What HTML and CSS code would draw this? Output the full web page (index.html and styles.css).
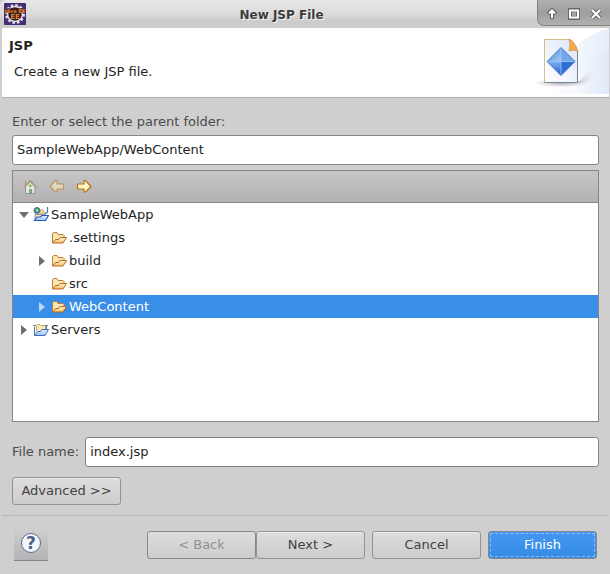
FILE: index.html
```
<!DOCTYPE html>
<html lang="en">
<head>
<meta charset="utf-8">
<title>New JSP File</title>
<link rel="stylesheet" href="styles.css">
</head>
<body>
<svg class="defs" aria-hidden="true">
  <defs>
    <linearGradient id="gold" x1="0" y1="0" x2="0" y2="1"><stop offset="0" stop-color="#fff3cf"/><stop offset="1" stop-color="#f3bf6c"/></linearGradient>
    <linearGradient id="blue" x1="0" y1="0" x2="0" y2="1"><stop offset="0" stop-color="#e6f1ff"/><stop offset="1" stop-color="#9cc0f4"/></linearGradient>
    <symbol id="folder" viewBox="0 0 16 16">
      <path d="M1.500 13V4l1-1.500h3.500l1 2h5l1 1v2.500" fill="#fbe5b4" stroke="#c08132"/>
      <path d="M1.500 13 4.500 9.500h3L9 7.500h6.500L12 13z" fill="url(#gold)" stroke="#b26d1d"/>
    </symbol>
    <symbol id="project" viewBox="0 0 16 16">
      <path d="M1.500 13V4.500M13.500 4v4" fill="none" stroke="#4a72bd"/>
      <path d="M3.500 9V3.500l1-1H7l1 1h4.500V8" fill="#fbe9b2" stroke="#c7a568"/>
      <path d="M0 3.500h3M12 3.500h3" stroke="#7c7e82"/>
      <path d="M1.500 13.500 4.500 9.500h3L9 7.500h6.500L12 13.500z" fill="url(#blue)" stroke="#3e68c2"/>
    </symbol>
    <symbol id="web" viewBox="0 0 16 16">
      <path d="M2 13.500V7.500h10.500v1.500" fill="#f8e3b0" stroke="#8598b8"/>
      <path d="M7 7V4l2-2 2 2v3z" fill="#f7d28c" stroke="#c9a15c" stroke-width=".7"/>
      <path d="M1.500 13.500 4 10h3.500L9 8.500h6.500L12.500 13.500z" fill="url(#blue)" stroke="#2858c5" stroke-width="1.200"/>
      <circle cx="4" cy="3.500" r="3" fill="#3c8a82" stroke="#4b779c"/>
      <path d="M2.500 2.500l2-1 1 2-2 2z" fill="#a6d79c"/>
      <path d="M14.500 0v4.500q0 2-3 1.500" fill="none" stroke="#4b75a9" stroke-width="1.200"/>
    </symbol>
    <symbol id="arrow" viewBox="0 0 16 16">
      <path d="M1.500 5H8V1.500h1.500L15 7.500 9.500 13H8V10H1.500z" fill="#fff2c4" stroke="#b8740e" stroke-width="1.200" stroke-linejoin="round"/>
    </symbol>
  </defs>
</svg>
<div class="dialog">
  <header class="titlebar">
    <svg class="app-icon" viewBox="0 0 22 22" aria-hidden="true">
      <rect width="22" height="22" rx="1" fill="#482c73"/>
      <circle cx="11" cy="11" r="8.500" fill="none" stroke="#e4dfe5" stroke-width="3" stroke-dasharray="2.500 1.950"/>
      <circle cx="11" cy="11" r="7.500" fill="#24202b" stroke="#e4dfe5" stroke-width="1.500"/>
      <path d="M1 5h20v5H1z" fill="#472021" opacity=".7"/>
      <text x="11" y="10" class="app-text">Java EE</text>
      <text x="11" y="16" class="app-text app-text-large">EE</text>
    </svg>
    <h1 class="title">New JSP File</h1>
    <div class="window-controls">
      <button type="button" aria-label="Roll up"><svg viewBox="0 0 12 12"><path d="M6 1v10M2 6l4-4 4 4" class="glyph-edge"/><path d="M6 2v8M3 5.500l3-3 3 3" class="glyph"/></svg></button>
      <button type="button" aria-label="Maximize"><svg viewBox="0 0 12 12"><path d="M2 2h8v8H2z" class="glyph-edge"/><path d="M2 2.500h8v7H2z" class="glyph glyph-square"/></svg></button>
      <button type="button" aria-label="Close"><svg viewBox="0 0 12 12"><path d="M2 2l8 8M10 2l-8 8" class="glyph-edge"/><path d="M2 2l8 8M10 2l-8 8" class="glyph"/></svg></button>
    </div>
  </header>
  <section class="banner">
    <div>
      <h2>JSP</h2>
      <p>Create a new JSP file.</p>
    </div>
    <svg class="banner-art" viewBox="0 0 74 66" aria-hidden="true">
      <defs>
        <linearGradient id="sky" x1="0" y1="0" x2="1" y2="0"><stop offset="0" stop-color="#fff"/><stop offset="1" stop-color="#dbe6f8"/></linearGradient>
        <linearGradient id="shade" x1="0" y1="0" x2="1" y2="0"><stop offset="0" stop-color="#b0a8c0"/><stop offset="1" stop-color="#dfe3f3" stop-opacity="0"/></linearGradient>
        <linearGradient id="page" x1="1" y1="0" x2="0" y2="1"><stop offset="0" stop-color="#dce4f8"/><stop offset="1" stop-color="#fff"/></linearGradient>
        <linearGradient id="gemtop" x1="0" y1="0" x2="1" y2="1"><stop offset="0" stop-color="#3d7bd2"/><stop offset="1" stop-color="#a7cdf8"/></linearGradient>
        <linearGradient id="gemlow" x1="0" y1="0" x2="0" y2="1"><stop offset="0" stop-color="#7fb2f3"/><stop offset="1" stop-color="#1b58c6"/></linearGradient>
        <radialGradient id="floor"><stop offset="0" stop-color="#8e7887" stop-opacity=".6"/><stop offset="1" stop-color="#8e7887" stop-opacity="0"/></radialGradient>
      </defs>
      <path d="M14 66Q26 14 74 0v66z" fill="url(#sky)" opacity=".7"/>
      <path d="M34 66Q42 29 74 21v45z" fill="url(#sky)" opacity=".6"/>
      <path d="M42 55 60 39v14z" fill="url(#shade)" opacity=".7"/>
      <ellipse cx="26" cy="55" rx="27" ry="4" fill="url(#floor)"/>
      <path d="M9.500 11.500h25l8 12v31h-33z" fill="url(#page)" stroke="#6d8d91"/>
      <path d="M9.500 54V11.500h25" fill="none" stroke="#d9bc8c"/>
      <path d="M34 11q6 2 9 13-3-3-9-1 2-7 0-12z" fill="#f6a84b" stroke="#d58d45" stroke-width=".7"/>
      <path d="M12 33.500 26 19.500v14z" fill="url(#gemtop)"/>
      <path d="M26 19.500 40 33.500H26z" fill="#72a8eb"/>
      <path d="M12 33.500h14v14z" fill="url(#gemlow)"/>
      <path d="M26 33.500h14L26 47.500z" fill="#2f70d6"/>
      <path d="M12 33.500 26 19.500l14 14-14 14z" fill="none" stroke="#2f68bb" stroke-width=".8"/>
      <path d="M13 33.500h26M26 20.500v26" stroke="#9ac5f8" stroke-width=".8"/>
    </svg>
  </section>
  <form class="content">
    <label class="folder-label" for="parent">Enter or select the parent folder:</label>
    <input id="parent" type="text" value="SampleWebApp/WebContent">
    <div class="browser">
      <div class="toolbar">
        <button type="button" aria-label="Home"><svg viewBox="0 0 16 16"><path d="M3.500 14.500V7.500L8 3l5 4.500v7z" fill="#e3e6dd" stroke="#8997a0"/><path d="M1.500 8.500 8.500 1.500l6 7M3.500 6V1.500" fill="none" stroke="#b19d72" stroke-width="1.200"/><path d="M7.500 10.500h2v3.500h-2z" fill="#a7bd46" stroke="#7598a0"/><path d="M7 5.500h2.500V8H7z" fill="#9bb756"/></svg></button>
        <button type="button" aria-label="Back" disabled><svg class="arrow-back" viewBox="0 0 16 16"><use href="#arrow"/></svg></button>
        <button type="button" aria-label="Forward"><svg viewBox="0 0 16 16"><use href="#arrow"/></svg></button>
      </div>
      <ul class="tree" role="tree" aria-label="Parent folder">
        <li role="treeitem" aria-expanded="true"><div class="row"><span class="twisty open"></span><svg><use href="#web"/></svg><span>SampleWebApp</span></div>
          <ul role="group">
            <li role="treeitem"><div class="row"><span class="twisty"></span><svg><use href="#folder"/></svg><span>.settings</span></div></li>
            <li role="treeitem" aria-expanded="false"><div class="row"><span class="twisty closed"></span><svg><use href="#folder"/></svg><span>build</span></div></li>
            <li role="treeitem"><div class="row"><span class="twisty"></span><svg><use href="#folder"/></svg><span>src</span></div></li>
            <li role="treeitem" aria-expanded="false" aria-selected="true"><div class="row selected"><span class="twisty closed"></span><svg><use href="#folder"/></svg><span>WebContent</span></div></li>
          </ul>
        </li>
        <li role="treeitem" aria-expanded="false"><div class="row"><span class="twisty closed"></span><svg><use href="#project"/></svg><span>Servers</span></div></li>
      </ul>
    </div>
    <div class="file-row">
      <label for="file">File name:</label>
      <input id="file" type="text" value="index.jsp">
    </div>
    <button type="button" class="button advanced">Advanced &gt;&gt;</button>
  </form>
  <footer class="footer">
    <button type="button" class="help" aria-label="Help"><svg viewBox="0 0 22 22"><circle cx="11" cy="11" r="9.500" fill="#f5f6f9" stroke="#566d94"/><text x="11" y="17" class="help-mark">?</text></svg></button>
    <div class="actions">
      <div class="pair">
        <button type="button" class="button" disabled>&lt; Back</button>
        <button type="button" class="button">Next &gt;</button>
      </div>
      <button type="button" class="button">Cancel</button>
      <button type="button" class="button primary">Finish</button>
    </div>
  </footer>
</div>
</body>
</html>
```
FILE: styles.css
```
* { box-sizing: border-box; }

body {
  margin: 0;
  background: #cfcfcf;
  color: #232323;
  font: 13px/16px "DejaVu Sans", sans-serif;
}

h1, h2, p, ul { margin: 0; padding: 0; }
ul { list-style: none; }
button, input { font: inherit; color: inherit; }
svg { display: block; flex: none; }
.defs { position: absolute; width: 0; height: 0; }

.dialog {
  display: flex;
  flex-direction: column;
  min-height: 100vh;
}

/* Title bar */
.titlebar {
  display: flex;
  align-items: center;
  height: 28px;
  padding-left: 4px;
  background: linear-gradient(#e9e7e9, #dddddd 45%, #cccccc 75%, #cecece);
  border-top-left-radius: 6px;
}
.app-icon { width: 22px; height: 22px; }
.app-text {
  fill: #ec7a21;
  font: bold 5px "DejaVu Sans", sans-serif;
  text-anchor: middle;
}
.app-text-large { font-size: 7px; }
.title {
  flex: 1;
  padding-top: 2px;
  font-size: 12px;
  line-height: 16px;
  text-align: center;
  color: #3b3b3b;
  text-shadow: 1px 1px 0 #f4f4f4;
}
.window-controls {
  display: flex;
  align-self: flex-start;
  align-items: center;
  gap: 10px;
  height: 26px;
  padding: 2px 8px 0;
  background: linear-gradient(#b2b0b2, #9f9f9f 50%, #b0b0b0);
  border: solid #838383;
  border-width: 0 0 1px 1px;
  border-bottom-left-radius: 7px;
}
.window-controls button {
  padding: 0;
  border: 0;
  background: none;
}
.window-controls svg { width: 12px; height: 12px; }
.glyph-edge { fill: none; stroke: #676767; stroke-width: 4; }
.glyph { fill: none; stroke: #fff; stroke-width: 2; }
.glyph-square { stroke-width: 2; }

/* Banner */
.banner {
  display: flex;
  justify-content: space-between;
  height: 70px;
  margin: 0 1px 0 2px;
  background: #fff;
  border-bottom: 1px solid #afafaf;
}
.banner > div { padding: 10px 0 0 7px; }
.banner h2 { font-size: 13px; line-height: 16px; }
.banner p { padding: 10px 0 0 5px; }
.banner-art { width: 74px; height: 66px; }

/* Form */
.content {
  display: flex;
  flex: 1;
  flex-direction: column;
  padding: 16px 11px 10px 12px;
  color: #4b4b4b;
}
.folder-label { padding-bottom: 5px; }
input {
  width: 100%;
  min-width: 0;
  height: 30px;
  padding: 0 4px 2px;
  border: 1px solid #858585;
  border-radius: 3px;
  background: #fff;
  color: #232323;
}
.browser {
  flex: 1;
  margin: 5px 0 15px;
  border: 1px solid #858585;
  background: #fff;
  color: #232323;
}
.toolbar {
  display: flex;
  align-items: center;
  gap: 11px;
  height: 32px;
  padding-left: 9px;
  background: linear-gradient(#c7c6c7, #b3b1b3);
  border-bottom: 1px solid #858585;
}
.toolbar button { padding: 0; border: 0; background: none; }
.toolbar svg { width: 16px; height: 16px; }
.arrow-back { opacity: .5; transform: scaleX(-1); }

.tree .row {
  display: flex;
  align-items: center;
  height: 23px;
  padding-left: 5px;
}
.tree ul .row { padding-left: 23px; }
.tree svg { width: 16px; height: 16px; margin-right: 2px; }
.twisty { flex: none; width: 12px; margin-right: 3px; }
.twisty::before {
  content: "";
  display: block;
  width: 0;
  margin: auto;
  border: solid transparent;
}
.open::before { border-width: 6px 5px 0; border-top-color: #6e6e6e; }
.closed::before { border-width: 5px 0 5px 6px; border-left-color: #6e6e6e; }
.tree .selected { background: #398ee7; color: #fff; }
.selected .closed::before { border-left-color: #b5d7f8; }

.file-row { display: flex; align-items: center; gap: 6px; }
.file-row label { flex: none; }

.button {
  width: 109px;
  height: 28px;
  padding: 0;
  border: 1px solid #929292;
  border-radius: 3px;
  background: linear-gradient(#dedcde, #cdcdcd);
  box-shadow: inset 0 1px #ededed;
  color: #414141;
}
.button:disabled { border-color: #878787; box-shadow: none; color: #919191; }
.advanced { margin-top: 10px; }

/* Footer */
.footer {
  display: flex;
  align-items: center;
  justify-content: space-between;
  height: 59px;
  margin: 0 1px 0 2px;
  padding: 0 12px;
  border-top: 1px solid #b6b6b6;
}
.help {
  display: flex;
  align-items: flex-start;
  justify-content: center;
  width: 34px;
  height: 31px;
  padding: 2px 0 0;
  border: 0;
  border-bottom: 1px solid #858585;
  background: linear-gradient(#cecece, #b5b3b5);
}
.help svg { width: 22px; height: 22px; }
.help-mark {
  fill: #48628f;
  font: bold 17px "DejaVu Sans", sans-serif;
  text-anchor: middle;
}
.actions { display: flex; gap: 7px; }
.pair { display: flex; }
.primary {
  border-color: #82888d;
  background: linear-gradient(#4498f2, #368be5);
  box-shadow: none;
  color: #fff;
  outline: 1px dashed #8abdf2;
  outline-offset: -3px;
}
```
